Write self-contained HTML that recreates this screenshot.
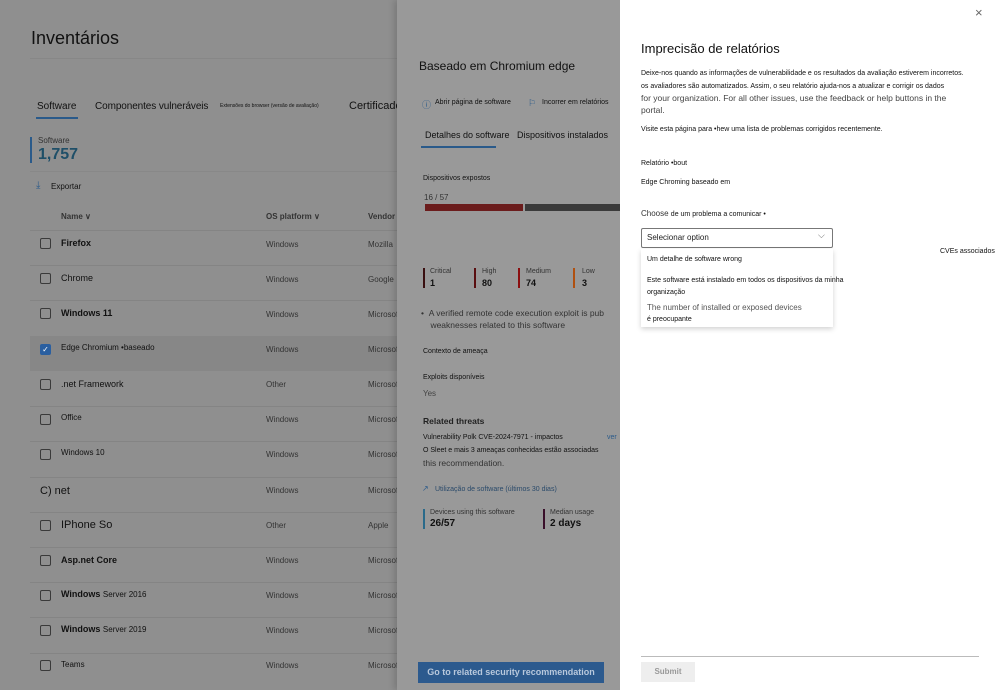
<!DOCTYPE html>
<html><head><meta charset="utf-8"><style>
*{margin:0;padding:0;box-sizing:border-box}
body{width:1000px;height:690px;overflow:hidden;position:relative;font-family:"Liberation Sans",sans-serif;background:#8f8f8f;color:#111}
.a{position:absolute;white-space:nowrap}
.l{position:absolute;left:30px;width:370px;height:1px;background:#848484}
.cb{position:absolute;left:40px;width:11px;height:11px;border:1px solid #3a3a3a;border-radius:2px}
.n{position:absolute;left:61px;font-size:9px;color:#111}
.os{position:absolute;left:266px;font-size:8px;color:#333}
.v{position:absolute;left:368px;font-size:8px;color:#333}
#mid{position:absolute;left:397px;top:0;width:223px;height:690px;background:#999;overflow:hidden;box-shadow:-3px 0 6px rgba(0,0,0,.15)}
#right{position:absolute;left:620px;top:0;width:380px;height:690px;background:#fff}
</style></head><body>
<div class="a" style="left:31px;top:28px;font-size:18px;color:#111">Inventários</div>
<div style="position:absolute;left:30px;top:58px;width:370px;height:1px;background:#878787"></div>
<div class="a" style="left:37px;top:101px;font-size:10px">Software</div>
<div style="position:absolute;left:36px;top:117px;width:42px;height:2px;background:#2a5a8a"></div>
<div class="a" style="left:95px;top:101px;font-size:10px;letter-spacing:-0.1px">Componentes vulneráveis</div>
<div class="a" style="left:220px;top:103px;font-size:5px">Extensões do browser (versão de avaliação)</div>
<div class="a" style="left:349px;top:100px;font-size:11px">Certificado</div>
<div style="position:absolute;left:30px;top:137px;width:2px;height:26px;background:#2a5a8a"></div>
<div class="a" style="left:38px;top:136px;font-size:8px;color:#333">Software</div>
<div class="a" style="left:38px;top:146px;font-size:16px;font-weight:bold;color:#1f4f68">1,757</div>
<div style="position:absolute;left:30px;top:171px;width:370px;height:1px;background:#888"></div>
<div class="a" style="left:36px;top:180px;font-size:10px;color:#2a5a8a">⤓</div>
<div class="a" style="left:51px;top:182px;font-size:8px">Exportar</div>
<div class="a" style="left:61px;top:212px;font-size:8px;font-weight:bold;color:#333">Name ∨</div>
<div class="a" style="left:266px;top:212px;font-size:8px;font-weight:bold;color:#333">OS platform ∨</div>
<div class="a" style="left:368px;top:212px;font-size:8px;font-weight:bold;color:#333">Vendor</div>
<div class="l" style="top:230px"></div>
<div style="position:absolute;left:30px;top:336px;width:370px;height:35px;background:#878787"></div>

<div class="cb" style="top:238px"></div><div class="n" style="top:238px;font-weight:bold">Firefox</div><div class="os" style="top:240px">Windows</div><div class="v" style="top:240px">Mozilla</div><div class="l" style="top:265px"></div>
<div class="cb" style="top:273px"></div><div class="n" style="top:273px">Chrome</div><div class="os" style="top:275px">Windows</div><div class="v" style="top:275px">Google</div><div class="l" style="top:300px"></div>
<div class="cb" style="top:308px"></div><div class="n" style="top:308px;font-weight:bold">Windows 11</div><div class="os" style="top:310px">Windows</div><div class="v" style="top:310px">Microsof</div>
<div class="cb" style="top:344px;background:#2a5fa0;border-color:#2a5fa0;color:#fff;font-size:8px;line-height:9px;text-align:center">✓</div><div class="n" style="top:343px;font-size:8px">Edge Chromium •baseado</div><div class="os" style="top:345px">Windows</div><div class="v" style="top:345px">Microsof</div>
<div class="cb" style="top:379px"></div><div class="n" style="top:379px">.net Framework</div><div class="os" style="top:380px">Other</div><div class="v" style="top:380px">Microsof</div><div class="l" style="top:406px"></div>
<div class="cb" style="top:414px"></div><div class="n" style="top:413px;font-size:8px">Office</div><div class="os" style="top:415px">Windows</div><div class="v" style="top:415px">Microsof</div><div class="l" style="top:441px"></div>
<div class="cb" style="top:449px"></div><div class="n" style="top:448px;font-size:8px">Windows 10</div><div class="os" style="top:450px">Windows</div><div class="v" style="top:450px">Microsof</div><div class="l" style="top:477px"></div>
<div class="a" style="left:40px;top:485px;font-size:11px">C) net</div><div class="os" style="top:486px">Windows</div><div class="v" style="top:486px">Microsof</div><div class="l" style="top:512px"></div>
<div class="cb" style="top:520px"></div><div class="n" style="top:519px;font-size:11px">IPhone So</div><div class="os" style="top:521px">Other</div><div class="v" style="top:521px">Apple</div><div class="l" style="top:547px"></div>
<div class="cb" style="top:555px"></div><div class="n" style="top:555px;font-weight:bold">Asp.net Core</div><div class="os" style="top:556px">Windows</div><div class="v" style="top:556px">Microsof</div><div class="l" style="top:582px"></div>
<div class="cb" style="top:590px"></div><div class="n" style="top:589px;font-weight:bold">Windows <span style="font-weight:normal;font-size:8px">Server 2016</span></div><div class="os" style="top:591px">Windows</div><div class="v" style="top:591px">Microsof</div><div class="l" style="top:617px"></div>
<div class="cb" style="top:625px"></div><div class="n" style="top:624px;font-weight:bold">Windows <span style="font-weight:normal;font-size:8px">Server 2019</span></div><div class="os" style="top:626px">Windows</div><div class="v" style="top:626px">Microsof</div><div class="l" style="top:653px"></div>
<div class="cb" style="top:660px"></div><div class="n" style="top:660px;font-size:8px">Teams</div><div class="os" style="top:661px">Windows</div><div class="v" style="top:661px">Microsof</div>

<div id="mid">
<div class="a" style="left:22px;top:59px;font-size:12px">Baseado em Chromium edge</div>
<div class="a" style="left:25px;top:98px;font-size:9px;color:#2a5a8a">ⓘ</div>
<div class="a" style="left:38px;top:99px;font-size:7px">Abrir página de software</div>
<div class="a" style="left:131px;top:98px;font-size:9px;color:#2a5a8a">⚐</div>
<div class="a" style="left:145px;top:99px;font-size:7px">Incorrer em relatórios</div>
<div class="a" style="left:28px;top:130px;font-size:9px">Detalhes do software</div>
<div class="a" style="left:120px;top:130px;font-size:9px">Dispositivos instalados</div>
<div style="position:absolute;left:24px;top:146px;width:75px;height:2px;background:#2a5a8a"></div>
<div class="a" style="left:26px;top:175px;font-size:7px">Dispositivos expostos</div>
<div class="a" style="left:27px;top:193px;font-size:8px;color:#333">16 / 57</div>
<div style="position:absolute;left:28px;top:204px;width:98px;height:7px;background:#6b1c1c"></div>
<div style="position:absolute;left:128px;top:204px;width:100px;height:7px;background:#3a3a3a"></div>
<div style="position:absolute;left:26px;top:268px;width:2px;height:20px;background:#3a0f10"></div>
<div class="a" style="left:33px;top:268px;font-size:7px;color:#333">Critical</div><div class="a" style="left:33px;top:278px;font-size:9px;font-weight:bold">1</div>
<div style="position:absolute;left:77px;top:268px;width:2px;height:20px;background:#5a0e10"></div>
<div class="a" style="left:85px;top:268px;font-size:7px;color:#333">High</div><div class="a" style="left:85px;top:278px;font-size:9px;font-weight:bold">80</div>
<div style="position:absolute;left:121px;top:268px;width:2px;height:20px;background:#8b0f10"></div>
<div class="a" style="left:129px;top:268px;font-size:7px;color:#333">Medium</div><div class="a" style="left:129px;top:278px;font-size:9px;font-weight:bold">74</div>
<div style="position:absolute;left:176px;top:268px;width:2px;height:20px;background:#b05010"></div>
<div class="a" style="left:185px;top:268px;font-size:7px;color:#333">Low</div><div class="a" style="left:185px;top:278px;font-size:9px;font-weight:bold">3</div>
<div class="a" style="left:24px;top:307px;font-size:8.5px;color:#333;line-height:12px">•&nbsp;&nbsp;A verified remote code execution exploit is pub<br>&nbsp;&nbsp;&nbsp;&nbsp;weaknesses related to this software</div>
<div class="a" style="left:26px;top:348px;font-size:7px">Contexto de ameaça</div>
<div class="a" style="left:26px;top:374px;font-size:7px">Exploits disponíveis</div>
<div class="a" style="left:26px;top:389px;font-size:8px;color:#444">Yes</div>
<div class="a" style="left:26px;top:416px;font-size:8.5px;font-weight:bold;color:#222">Related threats</div>
<div class="a" style="left:26px;top:434px;font-size:7px">Vulnerability Polk CVE-2024-7971 - impactos</div>
<div class="a" style="left:210px;top:434px;font-size:7px;color:#2a5a8a">ver</div>
<div class="a" style="left:26px;top:447px;font-size:7px">O Sleet e mais 3 ameaças conhecidas estão associadas</div>
<div class="a" style="left:26px;top:458px;font-size:8.5px;color:#333">this recommendation.</div>
<div class="a" style="left:25px;top:484px;font-size:8px;color:#2a5a8a">↗</div>
<div class="a" style="left:38px;top:486px;font-size:7px;color:#2a4a6a">Utilização de software (últimos 30 dias)</div>
<div style="position:absolute;left:26px;top:509px;width:2px;height:20px;background:#2a6a8a"></div>
<div class="a" style="left:33px;top:509px;font-size:7px;color:#333">Devices using this software</div>
<div class="a" style="left:33px;top:518px;font-size:10px;font-weight:bold">26/57</div>
<div style="position:absolute;left:146px;top:509px;width:2px;height:20px;background:#3a0f2a"></div>
<div class="a" style="left:153px;top:509px;font-size:7px;color:#333">Median usage</div>
<div class="a" style="left:153px;top:518px;font-size:10px;font-weight:bold">2 days</div>
<div style="position:absolute;left:21px;top:662px;width:186px;height:21px;background:#2c5a8e;color:#b8c8dc;font-size:9px;font-weight:bold;text-align:center;line-height:21px">Go to related security recommendation</div>
</div>

<div id="right">
<div class="a" style="left:355px;top:5px;font-size:13px;color:#666">×</div>
<div class="a" style="left:21px;top:41px;font-size:13px;color:#111">Imprecisão de relatórios</div>
<div class="a" style="left:21px;top:67px;font-size:7px;line-height:13px;color:#111">Deixe-nos quando as informações de vulnerabilidade e os resultados da avaliação estiverem incorretos.<br>os avaliadores são automatizados. Assim, o seu relatório ajuda-nos a atualizar e corrigir os dados</div>
<div class="a" style="left:21px;top:92px;font-size:8.5px;line-height:12px;color:#444">for your organization. For all other issues, use the feedback or help buttons in the<br>portal.</div>
<div class="a" style="left:21px;top:126px;font-size:7px;color:#111">Visite esta página para •hew uma lista de problemas corrigidos recentemente.</div>
<div class="a" style="left:21px;top:160px;font-size:7px">Relatório •bout</div>
<div class="a" style="left:21px;top:179px;font-size:7px">Edge Chroming baseado em</div>
<div class="a" style="left:21px;top:209px;font-size:8px;color:#333">Choose <span style="font-size:7px;color:#111">de um problema a comunicar •</span></div>
<div style="position:absolute;left:21px;top:228px;width:192px;height:20px;border:1px solid #777;border-radius:2px"></div>
<div class="a" style="left:27px;top:233px;font-size:8px;color:#222">Selecionar option</div>
<div class="a" style="left:198px;top:230px;font-size:9px;color:#666">⌵</div>
<div style="position:absolute;left:21px;top:249px;width:192px;height:78px;background:#fff;box-shadow:0 2px 5px rgba(0,0,0,.18)"></div>
<div class="a" style="left:27px;top:256px;font-size:7px">Um detalhe de software wrong</div>
<div class="a" style="left:27px;top:275px;font-size:7px;line-height:12px">Este software está instalado em todos os dispositivos da minha<br>organização</div>
<div class="a" style="left:27px;top:303px;font-size:8px;color:#555">The number of installed or exposed devices</div>
<div class="a" style="left:27px;top:316px;font-size:7px">é preocupante</div>
<div class="a" style="left:320px;top:248px;font-size:7px">CVEs associados</div>
<div style="position:absolute;left:21px;top:656px;width:338px;height:1px;background:#bbb"></div>
<div style="position:absolute;left:21px;top:662px;width:54px;height:20px;background:#eee;color:#999;font-size:8px;font-weight:bold;text-align:center;line-height:20px">Submit</div>
</div>
</body></html>
